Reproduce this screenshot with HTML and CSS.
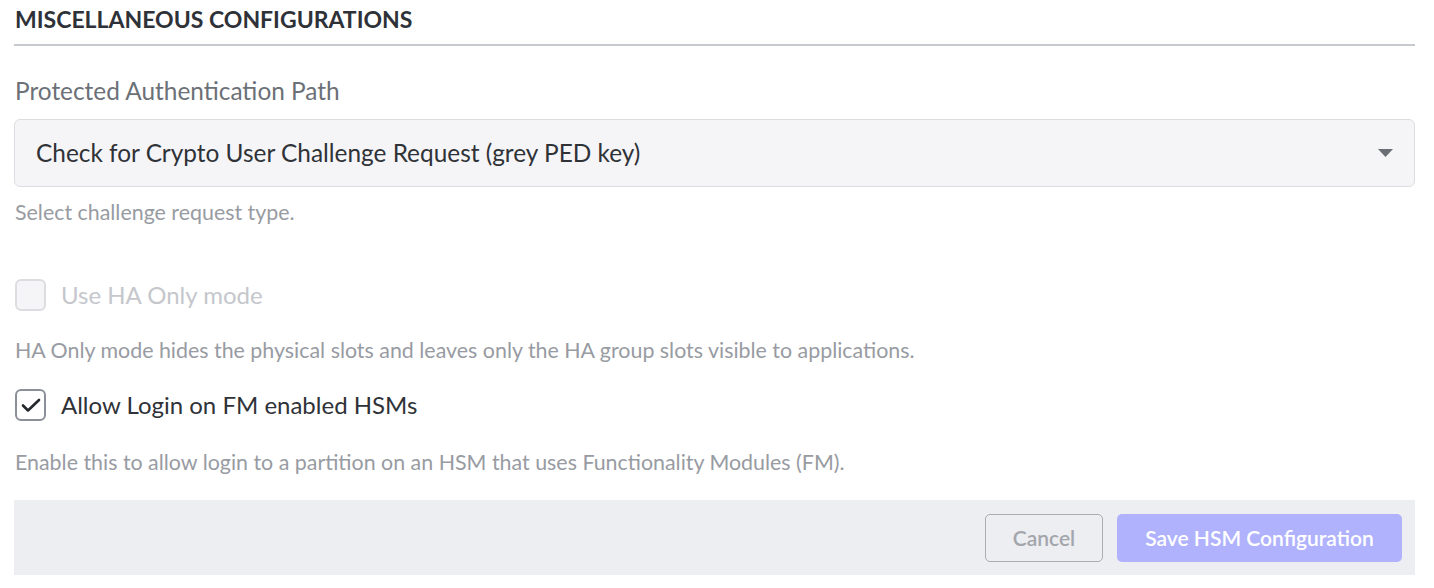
FILE: index.html
```html
<!DOCTYPE html>
<html lang="en">
<head>
<meta charset="utf-8">
<title>Miscellaneous Configurations</title>
<link rel="stylesheet" href="styles.css">
</head>
<body>
<div class="page">
  <h2 class="section-title">MISCELLANEOUS CONFIGURATIONS</h2>
  <div class="field">
    <label class="field-label">Protected Authentication Path</label>
    <div class="select">
      <span class="select-value">Check for Crypto User Challenge Request (grey PED key)</span>
      <svg class="caret" width="15" height="8" viewBox="0 0 15 8"><path d="M0 0 H15 L7.5 8 Z" fill="#6b6e75"/></svg>
    </div>
    <p class="help">Select challenge request type.</p>
  </div>
  <div class="check-field first">
    <div class="check-row disabled">
      <span class="box"></span>
      <span class="check-label">Use HA Only mode</span>
    </div>
    <p class="help">HA Only mode hides the physical slots and leaves only the HA group slots visible to applications.</p>
  </div>
  <div class="check-field second">
    <div class="check-row">
      <span class="box checked">
        <svg width="20" height="15" viewBox="0 0 20 15"><path d="M2 7.5 L7 12.5 L18 2" fill="none" stroke="#25282d" stroke-width="2.6" stroke-linecap="round" stroke-linejoin="round"/></svg>
      </span>
      <span class="check-label">Allow Login on FM enabled HSMs</span>
    </div>
    <p class="help">Enable this to allow login to a partition on an HSM that uses Functionality Modules (FM).</p>
  </div>
  <div class="footer">
    <button class="btn btn-cancel">Cancel</button>
    <button class="btn btn-save">Save HSM Configuration</button>
  </div>
</div>
</body>
</html>
```

FILE: styles.css
```css
* { box-sizing: border-box; }
body {
  margin: 0;
  background: #ffffff;
  font-family: "Lato", "Noto Sans", sans-serif;
}
.page {
  padding: 0 19px 0 14px;
}
.section-title {
  margin: 0;
  padding: 6px 0 0 1px;
  height: 46px;
  font-size: 23px;
  font-weight: 700;
  color: #2e3238;
  border-bottom: 2px solid #c6c9cd;
  line-height: 26px;
}
.field {
  padding-top: 30px;
}
.field-label {
  display: block;
  padding-left: 1px;
  font-size: 24.4px;
  line-height: 30px;
  color: #6c7077;
}
.select {
  margin-top: 13px;
  height: 68px;
  display: flex;
  align-items: center;
  justify-content: space-between;
  padding: 0 21px 0 21px;
  background: #f5f5f7;
  border: 1px solid #dcdde1;
  border-radius: 6px;
}
.select-value {
  font-size: 24.4px;
  line-height: 30px;
  color: #2f3237;
}
.caret { display: block; }
.help {
  margin: 0;
  padding-left: 1px;
  font-size: 21.4px;
  line-height: 24px;
  color: #989ba2;
}
.field .help { margin-top: 13px; }
.check-row {
  display: flex;
  align-items: center;
  gap: 15px;
  padding-left: 1px;
  height: 32px;
}
.box {
  flex: none;
  width: 31px;
  height: 32px;
  border: 2px solid #8b8f97;
  border-radius: 6px;
  display: flex;
  align-items: center;
  justify-content: center;
  background: #ffffff;
}
.check-label {
  font-size: 24px;
  line-height: 32px;
  color: #2f3237;
}
.disabled .box {
  border-color: #dcdde1;
  background: #f5f5f7;
}
.disabled .check-label { color: #c5c7cc; }
.first { margin-top: 55px; }
.first .help { margin-top: 27px; }
.second { margin-top: 27px; }
.second .help { margin-top: 29px; }
.footer {
  margin-top: 26px;
  height: 75px;
  background: #edeef2;
  display: flex;
  justify-content: flex-end;
  align-items: center;
  gap: 14px;
  padding-right: 13px;
}
.btn {
  height: 48px;
  border-radius: 5px;
  font-family: inherit;
  font-size: 21px;
  font-weight: 600;
}
.btn-cancel {
  width: 118px;
  background: transparent;
  border: 1.5px solid #a9acb1;
  color: #a3a6ab;
}
.btn-save {
  width: 285px;
  background: #b0b2fd;
  border: none;
  color: #ffffff;
}
```
